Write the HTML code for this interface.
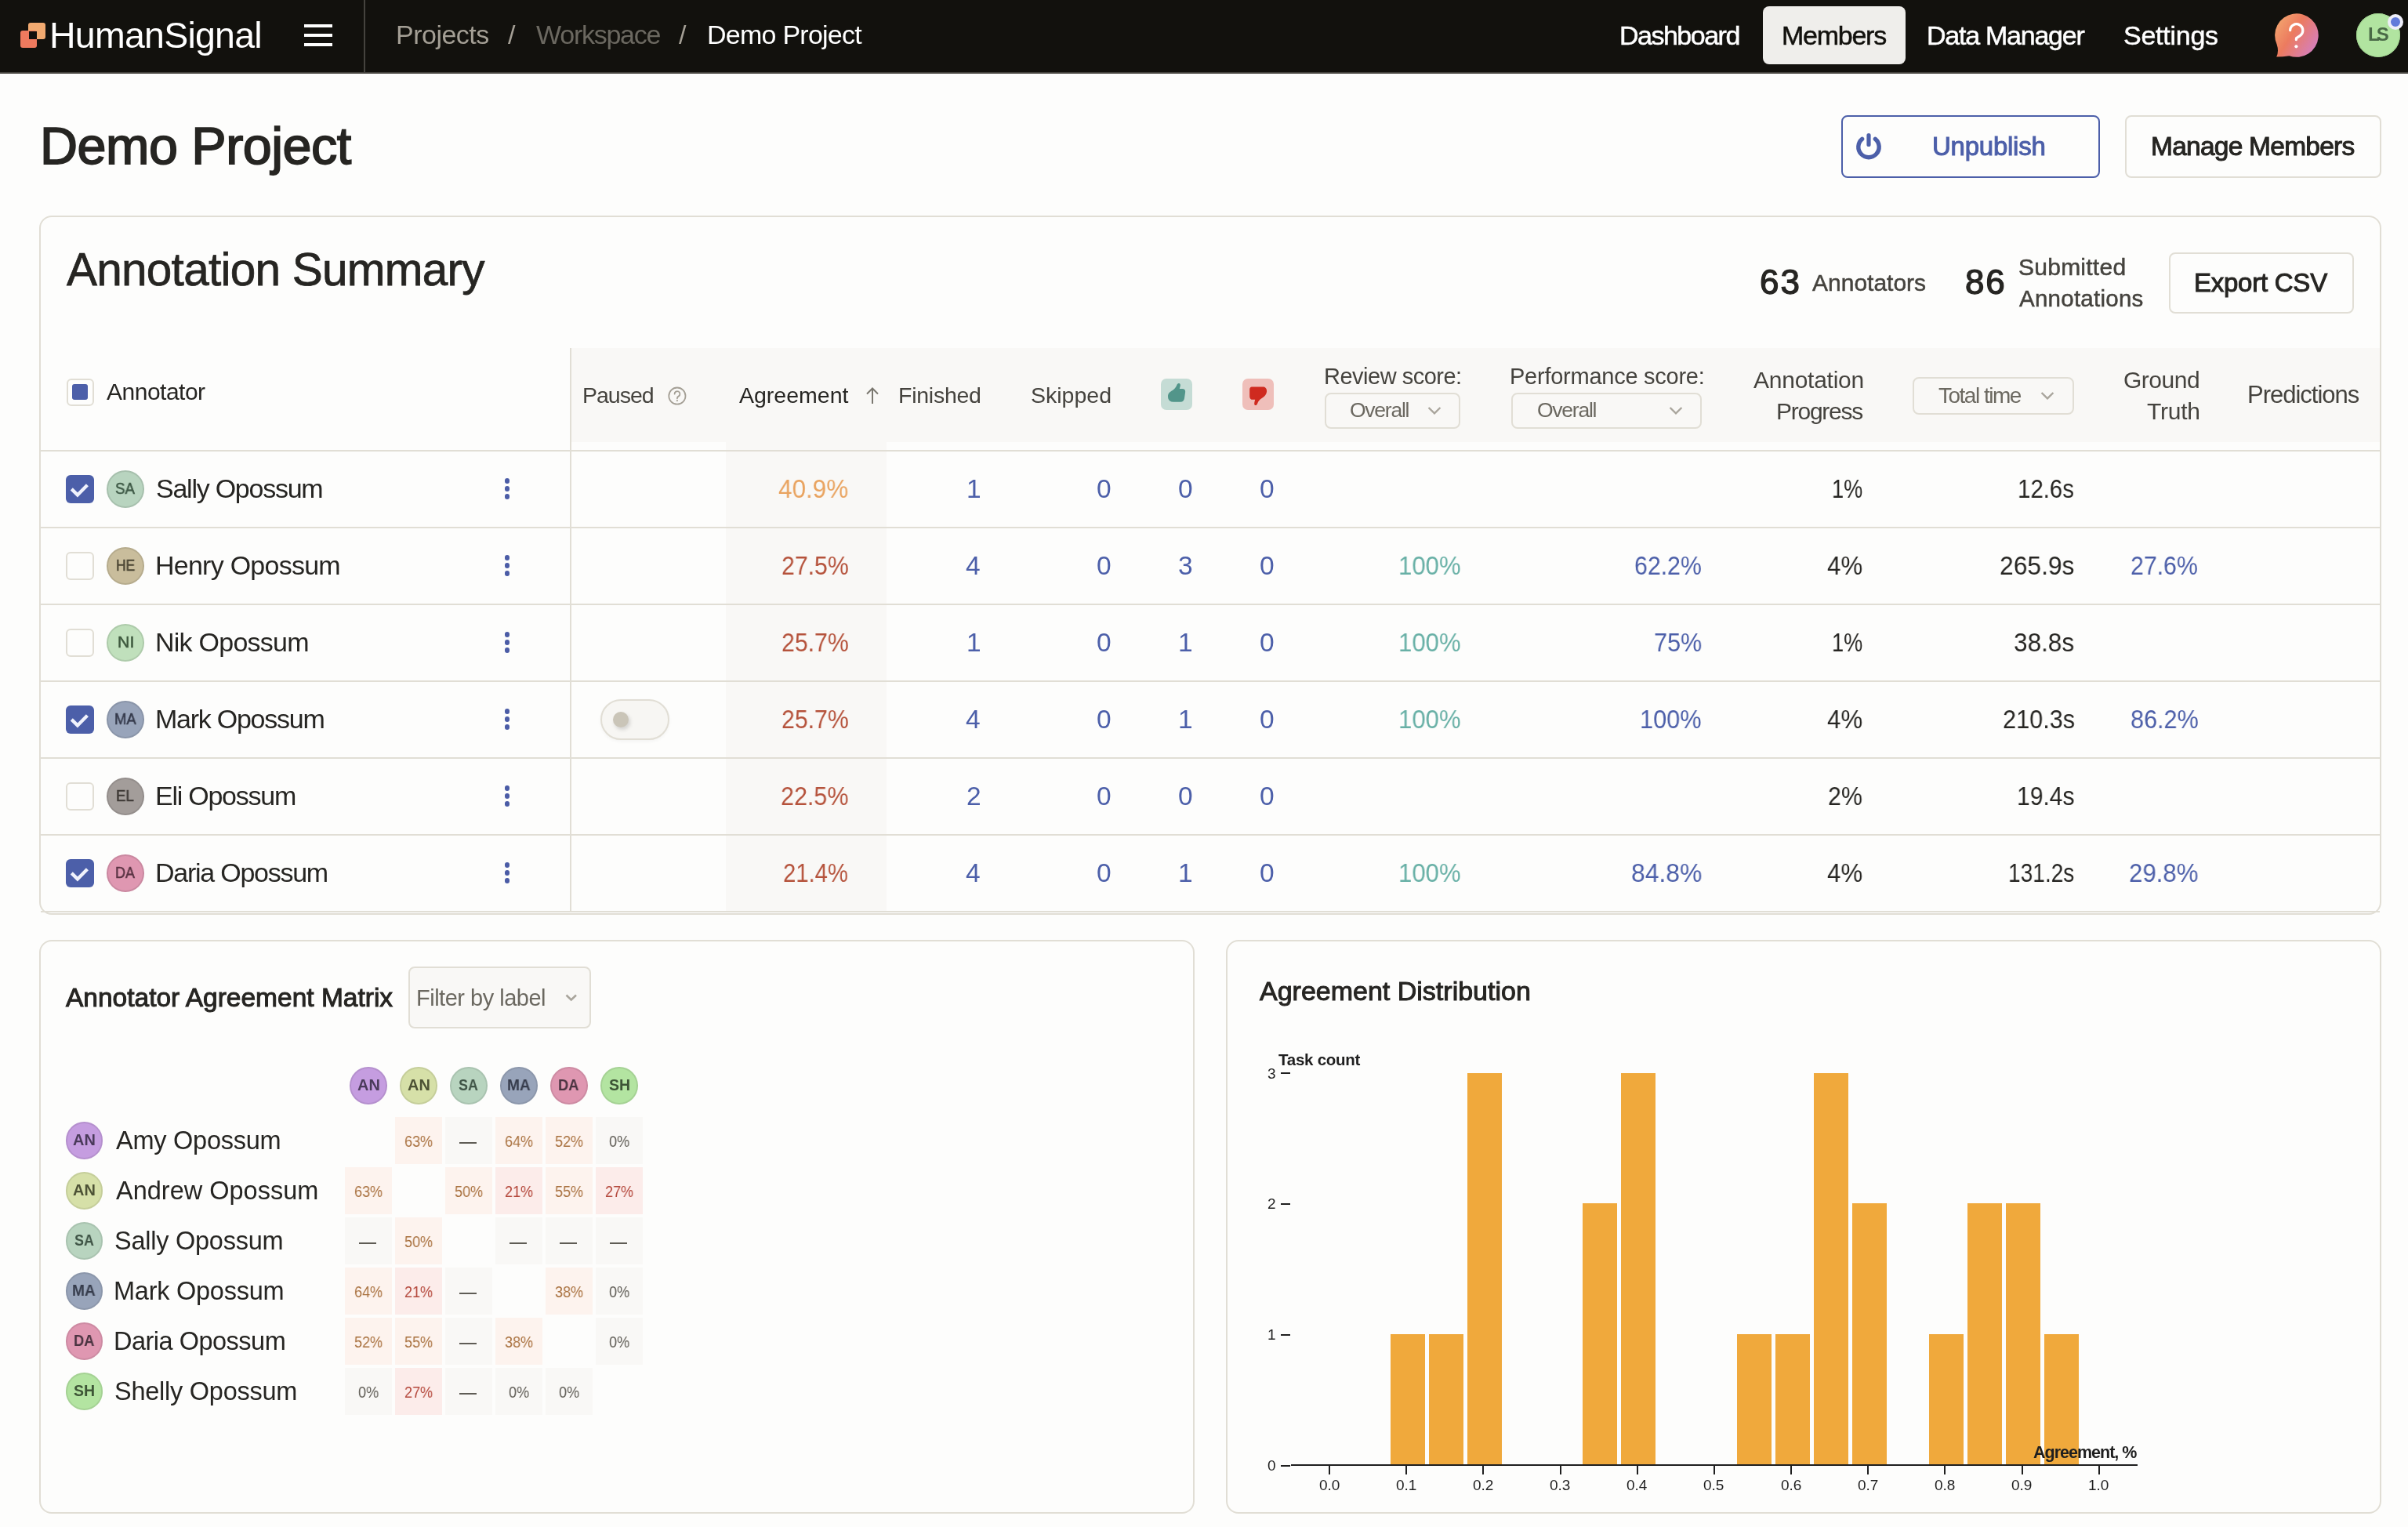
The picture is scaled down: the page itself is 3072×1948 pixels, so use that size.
<!DOCTYPE html><html><head><meta charset="utf-8"><style>
html,body{margin:0;padding:0;width:3072px;height:1948px;overflow:hidden;background:#fdfdfc}
body{position:relative;font-family:"Liberation Sans",sans-serif}
.t{position:absolute;white-space:pre;will-change:transform}
</style></head><body>
<div style="position:absolute;left:0px;top:0px;width:3072px;height:92px;background:#12110d"></div>
<div style="position:absolute;left:0px;top:92px;width:3072px;height:2px;background:#45433e"></div>
<div style="position:absolute;left:36px;top:29px;width:22px;height:21px;background:#f2aa70;border-radius:3px"></div>
<div style="position:absolute;left:26px;top:39px;width:21px;height:22px;background:#ee7a5e;border-radius:3px"></div>
<div style="position:absolute;left:37px;top:40px;width:10px;height:10px;background:#12110d"></div>
<div class="t" style="left:62.70px;top:21.75px;font-size:46.5px;line-height:46.5px;letter-spacing:-0.75px;font-weight:400;color:#ffffff;">HumanSignal</div>
<div style="position:absolute;left:388px;top:31px;width:36px;height:4px;background:#fff"></div>
<div style="position:absolute;left:388px;top:43px;width:36px;height:4px;background:#fff"></div>
<div style="position:absolute;left:388px;top:55px;width:36px;height:4px;background:#fff"></div>
<div style="position:absolute;left:464px;top:0px;width:2px;height:92px;background:#45433e"></div>
<div class="t" style="left:505.00px;top:27.10px;font-size:34.0px;line-height:34.0px;letter-spacing:-0.5px;font-weight:400;color:#a49f95;">Projects</div>
<div class="t" style="left:647.50px;top:27.10px;font-size:34.0px;line-height:34.0px;letter-spacing:0px;font-weight:400;color:#a49f95;">/</div>
<div class="t" style="left:684.40px;top:27.10px;font-size:34.0px;line-height:34.0px;letter-spacing:-1.25px;font-weight:400;color:#6b6860;">Workspace</div>
<div class="t" style="left:866.40px;top:27.10px;font-size:34.0px;line-height:34.0px;letter-spacing:0px;font-weight:400;color:#a49f95;">/</div>
<div class="t" style="left:901.80px;top:27.10px;font-size:34.0px;line-height:34.0px;letter-spacing:-0.75px;font-weight:400;color:#ffffff;">Demo Project</div>
<div class="t" style="left:2066.30px;top:27.50px;font-size:34.0px;line-height:34.0px;letter-spacing:-1.5px;font-weight:400;-webkit-text-stroke:0.5px;color:#ffffff;">Dashboard</div>
<div style="position:absolute;left:2249px;top:8px;width:182px;height:74px;background:#efeeeb;border-radius:8px"></div>
<div class="t" style="left:2272.60px;top:27.50px;font-size:34.0px;line-height:34.0px;letter-spacing:-1.25px;font-weight:400;-webkit-text-stroke:0.5px;color:#12110d;">Members</div>
<div class="t" style="left:2457.60px;top:27.50px;font-size:34.0px;line-height:34.0px;letter-spacing:-1.25px;font-weight:400;-webkit-text-stroke:0.5px;color:#ffffff;">Data Manager</div>
<div class="t" style="left:2709.00px;top:27.50px;font-size:34.0px;line-height:34.0px;letter-spacing:-0.25px;font-weight:400;-webkit-text-stroke:0.5px;color:#ffffff;">Settings</div>
<svg style="position:absolute;left:2898px;top:14px" width="64" height="64" viewBox="2898 14 64 64">
<defs><linearGradient id="hg" x1="0" y1="0.1" x2="1" y2="0.75"><stop offset="0" stop-color="#f4aa70"/><stop offset="0.45" stop-color="#ec7b5f"/><stop offset="1" stop-color="#d47fc0"/></linearGradient></defs>
<path d="M2904.6 56.5 A27.8 27.8 0 1 1 2920.5 71.2 Q2912 72.4 2904.2 72.4 Q2907.6 65.5 2904.6 56.5 Z" fill="url(#hg)"/>
<path d="M2921.6 38.6 A8.1 8.1 0 1 1 2934.2 45.6 L2929.6 48.6 L2929.4 50.6" stroke="#fff" stroke-width="3.3" fill="none" stroke-linecap="round" stroke-linejoin="round"/>
<circle cx="2929.4" cy="59.3" r="2.1" fill="#fff"/></svg>
<div style="position:absolute;left:3006px;top:17px;width:56px;height:56px;background:#b1e4a0;border-radius:50%;box-shadow:inset 0 0 0 1px #9fd18e"></div>
<div class="t" style="left:3020.80px;top:32.30px;font-size:24.0px;line-height:24.0px;letter-spacing:-4.0px;font-weight:700;color:#4a6a47;">LS</div>
<div style="position:absolute;left:3046px;top:18px;width:20px;height:20px;background:#617ada;border-radius:50%;box-shadow:0 0 0 0 #fff;border:4px solid #eeeef8;box-sizing:border-box"></div>
<div class="t" style="left:50.80px;top:152.65px;font-size:66.5px;line-height:66.5px;letter-spacing:-0.5px;font-weight:400;-webkit-text-stroke:1.75px;color:#262522;">Demo Project</div>
<div style="position:absolute;left:2349px;top:147px;width:330px;height:80px;border:2px solid #4c5fa9;border-radius:8px;box-sizing:border-box"></div>
<svg style="position:absolute;left:2364px;top:166px" width="40" height="40" viewBox="0 0 40 40">
<path d="M11.6 11.3 A13.2 13.2 0 1 0 28.4 11.3" stroke="#4c5fa9" stroke-width="5.4" fill="none" stroke-linecap="round"/>
<line x1="20" y1="6.6" x2="20" y2="18.5" stroke="#4c5fa9" stroke-width="5.2" stroke-linecap="round"/></svg>
<div class="t" style="left:2465.40px;top:169.90px;font-size:33.0px;line-height:33.0px;letter-spacing:-0.25px;font-weight:400;-webkit-text-stroke:1.0px;color:#4c5fa9;">Unpublish</div>
<div style="position:absolute;left:2711px;top:147px;width:327px;height:80px;border:2px solid #e1ded5;border-radius:8px;box-sizing:border-box"></div>
<div class="t" style="left:2743.70px;top:169.75px;font-size:33.5px;line-height:33.5px;letter-spacing:-0.75px;font-weight:400;-webkit-text-stroke:1.0px;color:#262522;">Manage Members</div>
<div style="position:absolute;left:50px;top:275px;width:2988px;height:892px;border:2px solid #e1ded5;border-radius:16px;box-sizing:border-box;background:#fdfdfc"></div>
<div class="t" style="left:84.70px;top:315.25px;font-size:58.5px;line-height:58.5px;letter-spacing:-0.75px;font-weight:400;-webkit-text-stroke:0.75px;color:#262522;">Annotation Summary</div>
<div class="t" style="left:2245.00px;top:338.40px;font-size:44.0px;line-height:44.0px;letter-spacing:2.0px;font-weight:400;-webkit-text-stroke:1.25px;color:#262522;">63</div>
<div class="t" style="left:2312.30px;top:345.70px;font-size:30.0px;line-height:30.0px;letter-spacing:0.0px;font-weight:400;-webkit-text-stroke:0.5px;color:#45433e;">Annotators</div>
<div class="t" style="left:2506.90px;top:338.40px;font-size:44.0px;line-height:44.0px;letter-spacing:1.75px;font-weight:400;-webkit-text-stroke:1.25px;color:#262522;">86</div>
<div class="t" style="left:2574.60px;top:326.10px;font-size:30.0px;line-height:30.0px;letter-spacing:0.25px;font-weight:400;-webkit-text-stroke:0.5px;color:#45433e;">Submitted</div>
<div class="t" style="left:2575.60px;top:365.75px;font-size:29.5px;line-height:29.5px;letter-spacing:0.25px;font-weight:400;-webkit-text-stroke:0.5px;color:#45433e;">Annotations</div>
<div style="position:absolute;left:2767px;top:322px;width:236px;height:78px;border:2px solid #e1ded5;border-radius:8px;box-sizing:border-box"></div>
<div class="t" style="left:2799.00px;top:344.30px;font-size:33.0px;line-height:33.0px;letter-spacing:-0.25px;font-weight:400;-webkit-text-stroke:1.0px;color:#262522;">Export CSV</div>
<div style="position:absolute;left:729px;top:444px;width:2307px;height:120px;background:#f9f8f6"></div>
<div style="position:absolute;left:926px;top:564px;width:205px;height:598px;background:#f9f8f6"></div>
<div style="position:absolute;left:52px;top:574px;width:2984px;height:2px;background:#e1ded5"></div>
<div style="position:absolute;left:52px;top:672px;width:2984px;height:2px;background:#e1ded5"></div>
<div style="position:absolute;left:52px;top:770px;width:2984px;height:2px;background:#e1ded5"></div>
<div style="position:absolute;left:52px;top:868px;width:2984px;height:2px;background:#e1ded5"></div>
<div style="position:absolute;left:52px;top:966px;width:2984px;height:2px;background:#e1ded5"></div>
<div style="position:absolute;left:52px;top:1064px;width:2984px;height:2px;background:#e1ded5"></div>
<div style="position:absolute;left:52px;top:1162px;width:2984px;height:2px;background:#e1ded5"></div>
<div style="position:absolute;left:727px;top:444px;width:2px;height:718px;background:#e1ded5"></div>
<div style="position:absolute;left:85px;top:483px;width:35px;height:35px;border:2px solid #e1ded5;border-radius:6px;box-sizing:border-box;background:#fdfdfc"></div>
<div style="position:absolute;left:92px;top:490px;width:20px;height:20px;background:#4c5fa9;border-radius:3px"></div>
<div class="t" style="left:136.20px;top:485.30px;font-size:30.0px;line-height:30.0px;letter-spacing:-0.5px;font-weight:400;color:#262522;">Annotator</div>
<div class="t" style="left:742.60px;top:489.75px;font-size:28.5px;line-height:28.5px;letter-spacing:-1.0px;font-weight:400;color:#45433e;">Paused</div>
<svg style="position:absolute;left:851px;top:492px" width="26" height="26" viewBox="0 0 26 26">
<circle cx="12.9" cy="13.1" r="10.6" stroke="#a49f95" stroke-width="1.8" fill="none"/>
<path d="M9.6 10.6 a3.4 3.4 0 1 1 5.2 2.8 q-1.9 1.1 -1.9 2.9" stroke="#a49f95" stroke-width="1.8" fill="none" stroke-linecap="round"/>
<circle cx="12.9" cy="19.1" r="1.1" fill="#a49f95"/></svg>
<div class="t" style="left:942.60px;top:489.75px;font-size:28.5px;line-height:28.5px;letter-spacing:0.0px;font-weight:400;color:#262522;">Agreement</div>
<svg style="position:absolute;left:1100px;top:490px" width="26" height="28" viewBox="0 0 26 28">
<path d="M13 25 V6 M6 12.5 L13 5.5 L20 12.5" stroke="#7a776f" stroke-width="2" fill="none"/></svg>
<div class="t" style="left:1145.70px;top:489.75px;font-size:28.5px;line-height:28.5px;letter-spacing:-0.25px;font-weight:400;color:#45433e;">Finished</div>
<div class="t" style="left:1314.90px;top:489.75px;font-size:28.5px;line-height:28.5px;letter-spacing:0.0px;font-weight:400;color:#45433e;">Skipped</div>
<div style="position:absolute;left:1481px;top:483px;width:40px;height:40px;background:#c5dcd5;border-radius:7px"></div>
<svg style="position:absolute;left:1481px;top:483px" width="40" height="40" viewBox="0 0 40 40">
<path d="M22.5 6 C24.5 5.5 25.3 7.5 24.6 10 L23.8 13 L27.5 13 C30.5 13 31.5 15 31 18 L30 25 C29.5 28 28 29.8 25 29.8 L16 29.8 C11.5 29.8 9 27 9 23 C9 19 11 17.5 13.5 15.8 C16.5 14 18.5 12 19.8 9.5 C20.5 7.5 21.2 6.3 22.5 6 Z" fill="#52958a"/></svg>
<div style="position:absolute;left:1585px;top:483px;width:40px;height:40px;background:#efbfba;border-radius:7px"></div>
<svg style="position:absolute;left:1585px;top:483px" width="40" height="40" viewBox="0 0 40 40">
<path d="M12 10.5 L26 10.5 C29.5 10.5 31.5 13 31 17 C30.5 20.5 28.5 22.5 25.5 24.5 C22.5 26.5 20.5 28 19.5 31 C18.8 33.3 17.5 34.5 16.3 34 C15 33.5 15 31.5 15.5 29.5 L16.2 26.8 L12.5 26.8 C10.3 26.8 9.2 25 9.2 22.5 L9.2 14 C9.2 11.8 10.3 10.5 12 10.5 Z" fill="#cf2a1f"/></svg>
<div class="t" style="left:1688.70px;top:465.70px;font-size:29.0px;line-height:29.0px;letter-spacing:-0.5px;font-weight:400;color:#45433e;">Review score:</div>
<div style="position:absolute;left:1690px;top:501px;width:173px;height:46px;border:2px solid #e1ded5;border-radius:8px;box-sizing:border-box;background:transparent"></div>
<div class="t" style="left:1722.00px;top:510.45px;font-size:26.5px;line-height:26.5px;letter-spacing:-1.25px;font-weight:400;color:#6b6860;">Overall</div>
<svg style="position:absolute;left:1820.4px;top:516.0px" width="20" height="16" viewBox="0 0 20 16"><path d="M2.6 4 L10 11.4 L17.4 4" stroke="#a9a59c" stroke-width="2.4" fill="none"/></svg>
<div class="t" style="left:1926.00px;top:465.70px;font-size:29.0px;line-height:29.0px;letter-spacing:-0.25px;font-weight:400;color:#45433e;">Performance score:</div>
<div style="position:absolute;left:1928px;top:501px;width:243px;height:46px;border:2px solid #e1ded5;border-radius:8px;box-sizing:border-box;background:transparent"></div>
<div class="t" style="left:1960.80px;top:510.45px;font-size:26.5px;line-height:26.5px;letter-spacing:-1.25px;font-weight:400;color:#6b6860;">Overall</div>
<svg style="position:absolute;left:2127.5px;top:516.0px" width="20" height="16" viewBox="0 0 20 16"><path d="M2.6 4 L10 11.4 L17.4 4" stroke="#a9a59c" stroke-width="2.4" fill="none"/></svg>
<div class="t" style="left:2236.70px;top:469.50px;font-size:30.0px;line-height:30.0px;letter-spacing:-0.25px;font-weight:400;color:#45433e;">Annotation</div>
<div class="t" style="left:2265.70px;top:509.60px;font-size:30.0px;line-height:30.0px;letter-spacing:-1.25px;font-weight:400;color:#45433e;">Progress</div>
<div style="position:absolute;left:2440px;top:481px;width:206px;height:48px;border:2px solid #e1ded5;border-radius:8px;box-sizing:border-box;background:transparent"></div>
<div class="t" style="left:2473.40px;top:490.90px;font-size:28.0px;line-height:28.0px;letter-spacing:-1.5px;font-weight:400;color:#6b6860;">Total time</div>
<svg style="position:absolute;left:2601.7px;top:497.0px" width="20" height="16" viewBox="0 0 20 16"><path d="M2.6 4 L10 11.4 L17.4 4" stroke="#a9a59c" stroke-width="2.4" fill="none"/></svg>
<div class="t" style="left:2708.50px;top:469.50px;font-size:30.0px;line-height:30.0px;letter-spacing:-0.5px;font-weight:400;color:#45433e;">Ground</div>
<div class="t" style="left:2738.50px;top:509.60px;font-size:30.0px;line-height:30.0px;letter-spacing:-0.25px;font-weight:400;color:#45433e;">Truth</div>
<div class="t" style="left:2867.40px;top:488.40px;font-size:31.0px;line-height:31.0px;letter-spacing:-1.0px;font-weight:400;color:#45433e;">Predictions</div>
<div style="position:absolute;left:84px;top:606px;width:36px;height:36px;background:#4c5fa9;border-radius:6px"></div>
<svg style="position:absolute;left:84px;top:606px" width="36" height="36" viewBox="0 0 36 36"><path d="M7.3 17.9 L14.9 25.4 L27.4 12.7" stroke="#f0f2fc" stroke-width="4.3" fill="none"/></svg>
<div style="position:absolute;left:136px;top:600.25px;width:47.75px;height:47.5px;background:#b8d4bf;border-radius:50%;box-shadow:inset 0 0 0 2px rgba(0,0,0,0.09)"></div>
<div class="t" style="left:147.24px;top:614.15px;font-size:19.5px;line-height:19.5px;letter-spacing:0px;font-weight:400;-webkit-text-stroke:0.5px;transform:scaleX(0.9600);transform-origin:0 0;color:#3f5a47;">SA</div>
<div class="t" style="left:198.90px;top:606.40px;font-size:34.0px;line-height:34.0px;letter-spacing:-1.25px;font-weight:400;color:#262522;">Sally Opossum</div>
<div style="position:absolute;left:643.8px;top:610.3px;width:6.400000000000091px;height:6.400000000000091px;background:#4b5ca6;border-radius:50%"></div>
<div style="position:absolute;left:643.8px;top:620.3px;width:6.400000000000091px;height:6.400000000000091px;background:#4b5ca6;border-radius:50%"></div>
<div style="position:absolute;left:643.8px;top:630.3px;width:6.400000000000091px;height:6.400000000000091px;background:#4b5ca6;border-radius:50%"></div>
<div class="t" style="left:993.06px;top:607.15px;font-size:33.5px;line-height:33.5px;letter-spacing:0px;font-weight:400;transform:scaleX(0.9387);transform-origin:0 0;color:#e9a35f;">40.9%</div>
<div class="t" style="left:1233.00px;top:607.15px;font-size:33.5px;line-height:33.5px;letter-spacing:0px;font-weight:400;color:#4c5fa9;">1</div>
<div class="t" style="left:1399.00px;top:607.15px;font-size:33.5px;line-height:33.5px;letter-spacing:0px;font-weight:400;color:#4c5fa9;">0</div>
<div class="t" style="left:1503.00px;top:607.15px;font-size:33.5px;line-height:33.5px;letter-spacing:0px;font-weight:400;color:#4c5fa9;">0</div>
<div class="t" style="left:1607.00px;top:607.15px;font-size:33.5px;line-height:33.5px;letter-spacing:0px;font-weight:400;color:#4c5fa9;">0</div>
<div class="t" style="left:2336.68px;top:607.15px;font-size:33.5px;line-height:33.5px;letter-spacing:0px;font-weight:400;transform:scaleX(0.8089);transform-origin:0 0;color:#262522;">1%</div>
<div class="t" style="left:2574.25px;top:607.15px;font-size:33.5px;line-height:33.5px;letter-spacing:0px;font-weight:400;transform:scaleX(0.8772);transform-origin:0 0;color:#262522;">12.6s</div>
<div style="position:absolute;left:84px;top:704px;width:36px;height:36px;border:2px solid #e1ded5;border-radius:6px;box-sizing:border-box;background:#fdfdfc"></div>
<div style="position:absolute;left:136px;top:698.25px;width:47.75px;height:47.5px;background:#c9bd9c;border-radius:50%;box-shadow:inset 0 0 0 2px rgba(0,0,0,0.09)"></div>
<div class="t" style="left:147.65px;top:712.15px;font-size:19.5px;line-height:19.5px;letter-spacing:0px;font-weight:400;-webkit-text-stroke:0.5px;transform:scaleX(0.8962);transform-origin:0 0;color:#4a4433;">HE</div>
<div class="t" style="left:197.90px;top:704.40px;font-size:34.0px;line-height:34.0px;letter-spacing:-0.75px;font-weight:400;color:#262522;">Henry Opossum</div>
<div style="position:absolute;left:643.8px;top:708.3px;width:6.400000000000091px;height:6.400000000000091px;background:#4b5ca6;border-radius:50%"></div>
<div style="position:absolute;left:643.8px;top:718.3px;width:6.400000000000091px;height:6.400000000000091px;background:#4b5ca6;border-radius:50%"></div>
<div style="position:absolute;left:643.8px;top:728.3px;width:6.400000000000091px;height:6.400000000000091px;background:#4b5ca6;border-radius:50%"></div>
<div class="t" style="left:996.50px;top:705.15px;font-size:33.5px;line-height:33.5px;letter-spacing:0px;font-weight:400;transform:scaleX(0.9022);transform-origin:0 0;color:#b5523b;">27.5%</div>
<div class="t" style="left:1232.00px;top:705.15px;font-size:33.5px;line-height:33.5px;letter-spacing:0px;font-weight:400;color:#4c5fa9;">4</div>
<div class="t" style="left:1399.00px;top:705.15px;font-size:33.5px;line-height:33.5px;letter-spacing:0px;font-weight:400;color:#4c5fa9;">0</div>
<div class="t" style="left:1503.00px;top:705.15px;font-size:33.5px;line-height:33.5px;letter-spacing:0px;font-weight:400;color:#4c5fa9;">3</div>
<div class="t" style="left:1607.00px;top:705.15px;font-size:33.5px;line-height:33.5px;letter-spacing:0px;font-weight:400;color:#4c5fa9;">0</div>
<div class="t" style="left:1783.64px;top:705.15px;font-size:33.5px;line-height:33.5px;letter-spacing:0px;font-weight:400;transform:scaleX(0.9277);transform-origin:0 0;color:#68b0a6;">100%</div>
<div class="t" style="left:2085.29px;top:705.15px;font-size:33.5px;line-height:33.5px;letter-spacing:0px;font-weight:400;transform:scaleX(0.9033);transform-origin:0 0;color:#4c5fa9;">62.2%</div>
<div class="t" style="left:2330.97px;top:705.15px;font-size:33.5px;line-height:33.5px;letter-spacing:0px;font-weight:400;transform:scaleX(0.9304);transform-origin:0 0;color:#262522;">4%</div>
<div class="t" style="left:2551.40px;top:705.15px;font-size:33.5px;line-height:33.5px;letter-spacing:0px;font-weight:400;transform:scaleX(0.9485);transform-origin:0 0;color:#262522;">265.9s</div>
<div class="t" style="left:2718.49px;top:705.15px;font-size:33.5px;line-height:33.5px;letter-spacing:0px;font-weight:400;transform:scaleX(0.9033);transform-origin:0 0;color:#4c5fa9;">27.6%</div>
<div style="position:absolute;left:84px;top:802px;width:36px;height:36px;border:2px solid #e1ded5;border-radius:6px;box-sizing:border-box;background:#fdfdfc"></div>
<div style="position:absolute;left:136px;top:796.25px;width:47.75px;height:47.5px;background:#c0e0bc;border-radius:50%;box-shadow:inset 0 0 0 2px rgba(0,0,0,0.09)"></div>
<div class="t" style="left:149.81px;top:810.15px;font-size:19.5px;line-height:19.5px;letter-spacing:0px;font-weight:400;-webkit-text-stroke:0.5px;transform:scaleX(1.0941);transform-origin:0 0;color:#3f5a3f;">NI</div>
<div class="t" style="left:197.90px;top:802.40px;font-size:34.0px;line-height:34.0px;letter-spacing:-0.75px;font-weight:400;color:#262522;">Nik Opossum</div>
<div style="position:absolute;left:643.8px;top:806.3px;width:6.400000000000091px;height:6.400000000000091px;background:#4b5ca6;border-radius:50%"></div>
<div style="position:absolute;left:643.8px;top:816.3px;width:6.400000000000091px;height:6.400000000000091px;background:#4b5ca6;border-radius:50%"></div>
<div style="position:absolute;left:643.8px;top:826.3px;width:6.400000000000091px;height:6.400000000000091px;background:#4b5ca6;border-radius:50%"></div>
<div class="t" style="left:996.50px;top:803.15px;font-size:33.5px;line-height:33.5px;letter-spacing:0px;font-weight:400;transform:scaleX(0.9022);transform-origin:0 0;color:#b5523b;">25.7%</div>
<div class="t" style="left:1233.00px;top:803.15px;font-size:33.5px;line-height:33.5px;letter-spacing:0px;font-weight:400;color:#4c5fa9;">1</div>
<div class="t" style="left:1399.00px;top:803.15px;font-size:33.5px;line-height:33.5px;letter-spacing:0px;font-weight:400;color:#4c5fa9;">0</div>
<div class="t" style="left:1503.00px;top:803.15px;font-size:33.5px;line-height:33.5px;letter-spacing:0px;font-weight:400;color:#4c5fa9;">1</div>
<div class="t" style="left:1607.00px;top:803.15px;font-size:33.5px;line-height:33.5px;letter-spacing:0px;font-weight:400;color:#4c5fa9;">0</div>
<div class="t" style="left:1783.64px;top:803.15px;font-size:33.5px;line-height:33.5px;letter-spacing:0px;font-weight:400;transform:scaleX(0.9277);transform-origin:0 0;color:#68b0a6;">100%</div>
<div class="t" style="left:2109.97px;top:803.15px;font-size:33.5px;line-height:33.5px;letter-spacing:0px;font-weight:400;transform:scaleX(0.9125);transform-origin:0 0;color:#4c5fa9;">75%</div>
<div class="t" style="left:2336.68px;top:803.15px;font-size:33.5px;line-height:33.5px;letter-spacing:0px;font-weight:400;transform:scaleX(0.8089);transform-origin:0 0;color:#262522;">1%</div>
<div class="t" style="left:2569.06px;top:803.15px;font-size:33.5px;line-height:33.5px;letter-spacing:0px;font-weight:400;transform:scaleX(0.9412);transform-origin:0 0;color:#262522;">38.8s</div>
<div style="position:absolute;left:84px;top:900px;width:36px;height:36px;background:#4c5fa9;border-radius:6px"></div>
<svg style="position:absolute;left:84px;top:900px" width="36" height="36" viewBox="0 0 36 36"><path d="M7.3 17.9 L14.9 25.4 L27.4 12.7" stroke="#f0f2fc" stroke-width="4.3" fill="none"/></svg>
<div style="position:absolute;left:136px;top:894.25px;width:47.75px;height:47.5px;background:#98a4ba;border-radius:50%;box-shadow:inset 0 0 0 2px rgba(0,0,0,0.09)"></div>
<div class="t" style="left:146.00px;top:908.15px;font-size:19.5px;line-height:19.5px;letter-spacing:0px;font-weight:400;-webkit-text-stroke:0.5px;transform:scaleX(0.9464);transform-origin:0 0;color:#34394a;">MA</div>
<div class="t" style="left:197.90px;top:900.40px;font-size:34.0px;line-height:34.0px;letter-spacing:-1.25px;font-weight:400;color:#262522;">Mark Opossum</div>
<div style="position:absolute;left:643.8px;top:904.3px;width:6.400000000000091px;height:6.400000000000091px;background:#4b5ca6;border-radius:50%"></div>
<div style="position:absolute;left:643.8px;top:914.3px;width:6.400000000000091px;height:6.400000000000091px;background:#4b5ca6;border-radius:50%"></div>
<div style="position:absolute;left:643.8px;top:924.3px;width:6.400000000000091px;height:6.400000000000091px;background:#4b5ca6;border-radius:50%"></div>
<div style="position:absolute;left:766px;top:892px;width:88px;height:52px;background:#f7f6f3;border:2px solid #e1ded5;border-radius:26px;box-sizing:border-box;box-shadow:0 2px 4px rgba(0,0,0,0.04)"></div>
<div style="position:absolute;left:782px;top:908px;width:20px;height:20px;background:#cac5b8;border-radius:50%;box-shadow:2px 3px 5px rgba(0,0,0,0.15)"></div>
<div class="t" style="left:996.50px;top:901.15px;font-size:33.5px;line-height:33.5px;letter-spacing:0px;font-weight:400;transform:scaleX(0.9022);transform-origin:0 0;color:#b5523b;">25.7%</div>
<div class="t" style="left:1232.00px;top:901.15px;font-size:33.5px;line-height:33.5px;letter-spacing:0px;font-weight:400;color:#4c5fa9;">4</div>
<div class="t" style="left:1399.00px;top:901.15px;font-size:33.5px;line-height:33.5px;letter-spacing:0px;font-weight:400;color:#4c5fa9;">0</div>
<div class="t" style="left:1503.00px;top:901.15px;font-size:33.5px;line-height:33.5px;letter-spacing:0px;font-weight:400;color:#4c5fa9;">1</div>
<div class="t" style="left:1607.00px;top:901.15px;font-size:33.5px;line-height:33.5px;letter-spacing:0px;font-weight:400;color:#4c5fa9;">0</div>
<div class="t" style="left:1783.64px;top:901.15px;font-size:33.5px;line-height:33.5px;letter-spacing:0px;font-weight:400;transform:scaleX(0.9277);transform-origin:0 0;color:#68b0a6;">100%</div>
<div class="t" style="left:2092.37px;top:901.15px;font-size:33.5px;line-height:33.5px;letter-spacing:0px;font-weight:400;transform:scaleX(0.9157);transform-origin:0 0;color:#4c5fa9;">100%</div>
<div class="t" style="left:2330.97px;top:901.15px;font-size:33.5px;line-height:33.5px;letter-spacing:0px;font-weight:400;transform:scaleX(0.9304);transform-origin:0 0;color:#262522;">4%</div>
<div class="t" style="left:2554.67px;top:901.15px;font-size:33.5px;line-height:33.5px;letter-spacing:0px;font-weight:400;transform:scaleX(0.9155);transform-origin:0 0;color:#262522;">210.3s</div>
<div class="t" style="left:2717.59px;top:901.15px;font-size:33.5px;line-height:33.5px;letter-spacing:0px;font-weight:400;transform:scaleX(0.9129);transform-origin:0 0;color:#4c5fa9;">86.2%</div>
<div style="position:absolute;left:84px;top:998px;width:36px;height:36px;border:2px solid #e1ded5;border-radius:6px;box-sizing:border-box;background:#fdfdfc"></div>
<div style="position:absolute;left:136px;top:992.25px;width:47.75px;height:47.5px;background:#a39d9a;border-radius:50%;box-shadow:inset 0 0 0 2px rgba(0,0,0,0.09)"></div>
<div class="t" style="left:148.24px;top:1006.15px;font-size:19.5px;line-height:19.5px;letter-spacing:0px;font-weight:400;-webkit-text-stroke:0.5px;transform:scaleX(0.9565);transform-origin:0 0;color:#3d3835;">EL</div>
<div class="t" style="left:197.90px;top:998.40px;font-size:34.0px;line-height:34.0px;letter-spacing:-1.25px;font-weight:400;color:#262522;">Eli Opossum</div>
<div style="position:absolute;left:643.8px;top:1002.3px;width:6.400000000000091px;height:6.400000000000091px;background:#4b5ca6;border-radius:50%"></div>
<div style="position:absolute;left:643.8px;top:1012.3px;width:6.400000000000091px;height:6.400000000000091px;background:#4b5ca6;border-radius:50%"></div>
<div style="position:absolute;left:643.8px;top:1022.3px;width:6.400000000000091px;height:6.400000000000091px;background:#4b5ca6;border-radius:50%"></div>
<div class="t" style="left:995.78px;top:999.15px;font-size:33.5px;line-height:33.5px;letter-spacing:0px;font-weight:400;transform:scaleX(0.9098);transform-origin:0 0;color:#b5523b;">22.5%</div>
<div class="t" style="left:1233.00px;top:999.15px;font-size:33.5px;line-height:33.5px;letter-spacing:0px;font-weight:400;color:#4c5fa9;">2</div>
<div class="t" style="left:1399.00px;top:999.15px;font-size:33.5px;line-height:33.5px;letter-spacing:0px;font-weight:400;color:#4c5fa9;">0</div>
<div class="t" style="left:1503.00px;top:999.15px;font-size:33.5px;line-height:33.5px;letter-spacing:0px;font-weight:400;color:#4c5fa9;">0</div>
<div class="t" style="left:1607.00px;top:999.15px;font-size:33.5px;line-height:33.5px;letter-spacing:0px;font-weight:400;color:#4c5fa9;">0</div>
<div class="t" style="left:2332.19px;top:999.15px;font-size:33.5px;line-height:33.5px;letter-spacing:0px;font-weight:400;transform:scaleX(0.9044);transform-origin:0 0;color:#262522;">2%</div>
<div class="t" style="left:2572.71px;top:999.15px;font-size:33.5px;line-height:33.5px;letter-spacing:0px;font-weight:400;transform:scaleX(0.8962);transform-origin:0 0;color:#262522;">19.4s</div>
<div style="position:absolute;left:84px;top:1096px;width:36px;height:36px;background:#4c5fa9;border-radius:6px"></div>
<svg style="position:absolute;left:84px;top:1096px" width="36" height="36" viewBox="0 0 36 36"><path d="M7.3 17.9 L14.9 25.4 L27.4 12.7" stroke="#f0f2fc" stroke-width="4.3" fill="none"/></svg>
<div style="position:absolute;left:136px;top:1090.25px;width:47.75px;height:47.5px;background:#df97b1;border-radius:50%;box-shadow:inset 0 0 0 2px rgba(0,0,0,0.09)"></div>
<div class="t" style="left:147.28px;top:1104.15px;font-size:19.5px;line-height:19.5px;letter-spacing:0px;font-weight:400;-webkit-text-stroke:0.5px;transform:scaleX(0.9231);transform-origin:0 0;color:#5a3343;">DA</div>
<div class="t" style="left:197.90px;top:1096.40px;font-size:34.0px;line-height:34.0px;letter-spacing:-1.25px;font-weight:400;color:#262522;">Daria Opossum</div>
<div style="position:absolute;left:643.8px;top:1100.3px;width:6.400000000000091px;height:6.400000000000091px;background:#4b5ca6;border-radius:50%"></div>
<div style="position:absolute;left:643.8px;top:1110.3px;width:6.400000000000091px;height:6.400000000000091px;background:#4b5ca6;border-radius:50%"></div>
<div style="position:absolute;left:643.8px;top:1120.3px;width:6.400000000000091px;height:6.400000000000091px;background:#4b5ca6;border-radius:50%"></div>
<div class="t" style="left:999.25px;top:1097.15px;font-size:33.5px;line-height:33.5px;letter-spacing:0px;font-weight:400;transform:scaleX(0.8728);transform-origin:0 0;color:#b5523b;">21.4%</div>
<div class="t" style="left:1232.00px;top:1097.15px;font-size:33.5px;line-height:33.5px;letter-spacing:0px;font-weight:400;color:#4c5fa9;">4</div>
<div class="t" style="left:1399.00px;top:1097.15px;font-size:33.5px;line-height:33.5px;letter-spacing:0px;font-weight:400;color:#4c5fa9;">0</div>
<div class="t" style="left:1503.00px;top:1097.15px;font-size:33.5px;line-height:33.5px;letter-spacing:0px;font-weight:400;color:#4c5fa9;">1</div>
<div class="t" style="left:1607.00px;top:1097.15px;font-size:33.5px;line-height:33.5px;letter-spacing:0px;font-weight:400;color:#4c5fa9;">0</div>
<div class="t" style="left:1783.64px;top:1097.15px;font-size:33.5px;line-height:33.5px;letter-spacing:0px;font-weight:400;transform:scaleX(0.9277);transform-origin:0 0;color:#68b0a6;">100%</div>
<div class="t" style="left:2080.85px;top:1097.15px;font-size:33.5px;line-height:33.5px;letter-spacing:0px;font-weight:400;transform:scaleX(0.9505);transform-origin:0 0;color:#4c5fa9;">84.8%</div>
<div class="t" style="left:2330.97px;top:1097.15px;font-size:33.5px;line-height:33.5px;letter-spacing:0px;font-weight:400;transform:scaleX(0.9304);transform-origin:0 0;color:#262522;">4%</div>
<div class="t" style="left:2562.32px;top:1097.15px;font-size:33.5px;line-height:33.5px;letter-spacing:0px;font-weight:400;transform:scaleX(0.8381);transform-origin:0 0;color:#262522;">131.2s</div>
<div class="t" style="left:2715.94px;top:1097.15px;font-size:33.5px;line-height:33.5px;letter-spacing:0px;font-weight:400;transform:scaleX(0.9304);transform-origin:0 0;color:#4c5fa9;">29.8%</div>
<div style="position:absolute;left:50px;top:1199px;width:1474px;height:732px;border:2px solid #e1ded5;border-radius:16px;box-sizing:border-box;background:#fdfdfc"></div>
<div class="t" style="left:84.30px;top:1255.55px;font-size:33.5px;line-height:33.5px;letter-spacing:0.0px;font-weight:400;-webkit-text-stroke:1.0px;color:#262522;">Annotator Agreement Matrix</div>
<div style="position:absolute;left:521px;top:1233px;width:233px;height:79px;border:2px solid #e1ded5;border-radius:8px;box-sizing:border-box;background:#f9f8f6"></div>
<div class="t" style="left:530.80px;top:1258.60px;font-size:29.0px;line-height:29.0px;letter-spacing:-0.5px;font-weight:400;color:#6b6860;">Filter by label</div>
<svg style="position:absolute;left:719px;top:1265px" width="20" height="16" viewBox="0 0 20 16"><path d="M3.5 4.5 L9.7 10.5 L16 4.5" stroke="#a9a59c" stroke-width="2.6" fill="none"/></svg>
<div style="position:absolute;left:446.2px;top:1361.2px;width:47.60000000000002px;height:47.59999999999991px;background:#c59de0;border-radius:50%;box-shadow:inset 0 0 0 2px rgba(0,0,0,0.08)"></div>
<div class="t" style="left:455.68px;top:1375.00px;font-size:19.5px;line-height:19.5px;letter-spacing:0px;font-weight:700;transform:scaleX(1.0231);transform-origin:0 0;color:#4a3a5a;">AN</div>
<div style="position:absolute;left:510.2px;top:1361.2px;width:47.599999999999966px;height:47.59999999999991px;background:#d6e0a8;border-radius:50%;box-shadow:inset 0 0 0 2px rgba(0,0,0,0.08)"></div>
<div class="t" style="left:519.68px;top:1375.00px;font-size:19.5px;line-height:19.5px;letter-spacing:0px;font-weight:700;transform:scaleX(1.0231);transform-origin:0 0;color:#4d5235;">AN</div>
<div style="position:absolute;left:574.2px;top:1361.2px;width:47.59999999999991px;height:47.59999999999991px;background:#b8d4bf;border-radius:50%;box-shadow:inset 0 0 0 2px rgba(0,0,0,0.08)"></div>
<div class="t" style="left:585.13px;top:1375.00px;font-size:19.5px;line-height:19.5px;letter-spacing:0px;font-weight:700;transform:scaleX(0.9192);transform-origin:0 0;color:#3f5446;">SA</div>
<div style="position:absolute;left:638.2px;top:1361.2px;width:47.59999999999991px;height:47.59999999999991px;background:#98a4ba;border-radius:50%;box-shadow:inset 0 0 0 2px rgba(0,0,0,0.08)"></div>
<div class="t" style="left:646.82px;top:1375.00px;font-size:19.5px;line-height:19.5px;letter-spacing:0px;font-weight:700;transform:scaleX(0.9793);transform-origin:0 0;color:#363c4c;">MA</div>
<div style="position:absolute;left:702.2px;top:1361.2px;width:47.59999999999991px;height:47.59999999999991px;background:#df97b1;border-radius:50%;box-shadow:inset 0 0 0 2px rgba(0,0,0,0.08)"></div>
<div class="t" style="left:712.36px;top:1375.00px;font-size:19.5px;line-height:19.5px;letter-spacing:0px;font-weight:700;transform:scaleX(0.9407);transform-origin:0 0;color:#4a3340;">DA</div>
<div style="position:absolute;left:766.2px;top:1361.2px;width:47.59999999999991px;height:47.59999999999991px;background:#b3e4a1;border-radius:50%;box-shadow:inset 0 0 0 2px rgba(0,0,0,0.08)"></div>
<div class="t" style="left:776.50px;top:1375.00px;font-size:19.5px;line-height:19.5px;letter-spacing:0px;font-weight:700;color:#3d5536;">SH</div>
<div style="position:absolute;left:83.60000000000001px;top:1431.2px;width:47.60000000000001px;height:47.59999999999991px;background:#c59de0;border-radius:50%;box-shadow:inset 0 0 0 2px rgba(0,0,0,0.08)"></div>
<div class="t" style="left:93.08px;top:1445.00px;font-size:19.5px;line-height:19.5px;letter-spacing:0px;font-weight:700;transform:scaleX(1.0231);transform-origin:0 0;color:#4a3a5a;">AN</div>
<div class="t" style="left:148.30px;top:1438.75px;font-size:32.5px;line-height:32.5px;letter-spacing:-0.25px;font-weight:400;color:#262522;">Amy Opossum</div>
<div style="position:absolute;left:83.60000000000001px;top:1495.2px;width:47.60000000000001px;height:47.59999999999991px;background:#d6e0a8;border-radius:50%;box-shadow:inset 0 0 0 2px rgba(0,0,0,0.08)"></div>
<div class="t" style="left:93.08px;top:1509.00px;font-size:19.5px;line-height:19.5px;letter-spacing:0px;font-weight:700;transform:scaleX(1.0231);transform-origin:0 0;color:#4d5235;">AN</div>
<div class="t" style="left:148.30px;top:1502.75px;font-size:32.5px;line-height:32.5px;letter-spacing:0.0px;font-weight:400;color:#262522;">Andrew Opossum</div>
<div style="position:absolute;left:83.60000000000001px;top:1559.2px;width:47.60000000000001px;height:47.59999999999991px;background:#b8d4bf;border-radius:50%;box-shadow:inset 0 0 0 2px rgba(0,0,0,0.08)"></div>
<div class="t" style="left:94.53px;top:1573.00px;font-size:19.5px;line-height:19.5px;letter-spacing:0px;font-weight:700;transform:scaleX(0.9192);transform-origin:0 0;color:#3f5446;">SA</div>
<div class="t" style="left:146.30px;top:1566.75px;font-size:32.5px;line-height:32.5px;letter-spacing:-0.25px;font-weight:400;color:#262522;">Sally Opossum</div>
<div style="position:absolute;left:83.60000000000001px;top:1623.2px;width:47.60000000000001px;height:47.59999999999991px;background:#98a4ba;border-radius:50%;box-shadow:inset 0 0 0 2px rgba(0,0,0,0.08)"></div>
<div class="t" style="left:92.22px;top:1637.00px;font-size:19.5px;line-height:19.5px;letter-spacing:0px;font-weight:700;transform:scaleX(0.9793);transform-origin:0 0;color:#363c4c;">MA</div>
<div class="t" style="left:145.30px;top:1630.75px;font-size:32.5px;line-height:32.5px;letter-spacing:-0.25px;font-weight:400;color:#262522;">Mark Opossum</div>
<div style="position:absolute;left:83.60000000000001px;top:1687.2px;width:47.60000000000001px;height:47.59999999999991px;background:#df97b1;border-radius:50%;box-shadow:inset 0 0 0 2px rgba(0,0,0,0.08)"></div>
<div class="t" style="left:93.76px;top:1701.00px;font-size:19.5px;line-height:19.5px;letter-spacing:0px;font-weight:700;transform:scaleX(0.9407);transform-origin:0 0;color:#4a3340;">DA</div>
<div class="t" style="left:145.30px;top:1694.75px;font-size:32.5px;line-height:32.5px;letter-spacing:-0.5px;font-weight:400;color:#262522;">Daria Opossum</div>
<div style="position:absolute;left:83.60000000000001px;top:1751.2px;width:47.60000000000001px;height:47.59999999999991px;background:#b3e4a1;border-radius:50%;box-shadow:inset 0 0 0 2px rgba(0,0,0,0.08)"></div>
<div class="t" style="left:93.90px;top:1765.00px;font-size:19.5px;line-height:19.5px;letter-spacing:0px;font-weight:700;color:#3d5536;">SH</div>
<div class="t" style="left:146.30px;top:1758.75px;font-size:32.5px;line-height:32.5px;letter-spacing:-0.25px;font-weight:400;color:#262522;">Shelly Opossum</div>
<div style="position:absolute;left:504px;top:1425px;width:60px;height:60px;background:#fdf3ee"></div>
<div class="t" style="left:515.96px;top:1446.05px;font-size:20.5px;line-height:20.5px;letter-spacing:0px;font-weight:400;transform:scaleX(0.8800);transform-origin:0 0;color:#a9713f;">63%</div>
<div style="position:absolute;left:568px;top:1425px;width:60px;height:60px;background:#f9f8f6"></div>
<div style="position:absolute;left:586px;top:1457px;width:22px;height:2px;background:#5f5c55"></div>
<div style="position:absolute;left:632px;top:1425px;width:60px;height:60px;background:#fdf3ee"></div>
<div class="t" style="left:643.96px;top:1446.05px;font-size:20.5px;line-height:20.5px;letter-spacing:0px;font-weight:400;transform:scaleX(0.8800);transform-origin:0 0;color:#a9713f;">64%</div>
<div style="position:absolute;left:696px;top:1425px;width:60px;height:60px;background:#fdf3ee"></div>
<div class="t" style="left:707.96px;top:1446.05px;font-size:20.5px;line-height:20.5px;letter-spacing:0px;font-weight:400;transform:scaleX(0.8800);transform-origin:0 0;color:#a9713f;">52%</div>
<div style="position:absolute;left:760px;top:1425px;width:60px;height:60px;background:#f9f8f6"></div>
<div class="t" style="left:776.80px;top:1446.05px;font-size:20.5px;line-height:20.5px;letter-spacing:0px;font-weight:400;transform:scaleX(0.8800);transform-origin:0 0;color:#5f5c55;">0%</div>
<div style="position:absolute;left:440px;top:1489px;width:60px;height:60px;background:#fdf3ee"></div>
<div class="t" style="left:451.96px;top:1510.05px;font-size:20.5px;line-height:20.5px;letter-spacing:0px;font-weight:400;transform:scaleX(0.8800);transform-origin:0 0;color:#a9713f;">63%</div>
<div style="position:absolute;left:568px;top:1489px;width:60px;height:60px;background:#fdf3ee"></div>
<div class="t" style="left:579.96px;top:1510.05px;font-size:20.5px;line-height:20.5px;letter-spacing:0px;font-weight:400;transform:scaleX(0.8800);transform-origin:0 0;color:#a9713f;">50%</div>
<div style="position:absolute;left:632px;top:1489px;width:60px;height:60px;background:#fcecea"></div>
<div class="t" style="left:643.96px;top:1510.05px;font-size:20.5px;line-height:20.5px;letter-spacing:0px;font-weight:400;transform:scaleX(0.8800);transform-origin:0 0;color:#b4473b;">21%</div>
<div style="position:absolute;left:696px;top:1489px;width:60px;height:60px;background:#fdf3ee"></div>
<div class="t" style="left:707.96px;top:1510.05px;font-size:20.5px;line-height:20.5px;letter-spacing:0px;font-weight:400;transform:scaleX(0.8800);transform-origin:0 0;color:#a9713f;">55%</div>
<div style="position:absolute;left:760px;top:1489px;width:60px;height:60px;background:#fcecea"></div>
<div class="t" style="left:771.96px;top:1510.05px;font-size:20.5px;line-height:20.5px;letter-spacing:0px;font-weight:400;transform:scaleX(0.8800);transform-origin:0 0;color:#b4473b;">27%</div>
<div style="position:absolute;left:440px;top:1553px;width:60px;height:60px;background:#f9f8f6"></div>
<div style="position:absolute;left:458px;top:1585px;width:22px;height:2px;background:#5f5c55"></div>
<div style="position:absolute;left:504px;top:1553px;width:60px;height:60px;background:#fdf3ee"></div>
<div class="t" style="left:515.96px;top:1574.05px;font-size:20.5px;line-height:20.5px;letter-spacing:0px;font-weight:400;transform:scaleX(0.8800);transform-origin:0 0;color:#a9713f;">50%</div>
<div style="position:absolute;left:632px;top:1553px;width:60px;height:60px;background:#f9f8f6"></div>
<div style="position:absolute;left:650px;top:1585px;width:22px;height:2px;background:#5f5c55"></div>
<div style="position:absolute;left:696px;top:1553px;width:60px;height:60px;background:#f9f8f6"></div>
<div style="position:absolute;left:714px;top:1585px;width:22px;height:2px;background:#5f5c55"></div>
<div style="position:absolute;left:760px;top:1553px;width:60px;height:60px;background:#f9f8f6"></div>
<div style="position:absolute;left:778px;top:1585px;width:22px;height:2px;background:#5f5c55"></div>
<div style="position:absolute;left:440px;top:1617px;width:60px;height:60px;background:#fdf3ee"></div>
<div class="t" style="left:451.96px;top:1638.05px;font-size:20.5px;line-height:20.5px;letter-spacing:0px;font-weight:400;transform:scaleX(0.8800);transform-origin:0 0;color:#a9713f;">64%</div>
<div style="position:absolute;left:504px;top:1617px;width:60px;height:60px;background:#fcecea"></div>
<div class="t" style="left:515.96px;top:1638.05px;font-size:20.5px;line-height:20.5px;letter-spacing:0px;font-weight:400;transform:scaleX(0.8800);transform-origin:0 0;color:#b4473b;">21%</div>
<div style="position:absolute;left:568px;top:1617px;width:60px;height:60px;background:#f9f8f6"></div>
<div style="position:absolute;left:586px;top:1649px;width:22px;height:2px;background:#5f5c55"></div>
<div style="position:absolute;left:696px;top:1617px;width:60px;height:60px;background:#fdf3ee"></div>
<div class="t" style="left:707.96px;top:1638.05px;font-size:20.5px;line-height:20.5px;letter-spacing:0px;font-weight:400;transform:scaleX(0.8800);transform-origin:0 0;color:#a9713f;">38%</div>
<div style="position:absolute;left:760px;top:1617px;width:60px;height:60px;background:#f9f8f6"></div>
<div class="t" style="left:776.80px;top:1638.05px;font-size:20.5px;line-height:20.5px;letter-spacing:0px;font-weight:400;transform:scaleX(0.8800);transform-origin:0 0;color:#5f5c55;">0%</div>
<div style="position:absolute;left:440px;top:1681px;width:60px;height:60px;background:#fdf3ee"></div>
<div class="t" style="left:451.96px;top:1702.05px;font-size:20.5px;line-height:20.5px;letter-spacing:0px;font-weight:400;transform:scaleX(0.8800);transform-origin:0 0;color:#a9713f;">52%</div>
<div style="position:absolute;left:504px;top:1681px;width:60px;height:60px;background:#fdf3ee"></div>
<div class="t" style="left:515.96px;top:1702.05px;font-size:20.5px;line-height:20.5px;letter-spacing:0px;font-weight:400;transform:scaleX(0.8800);transform-origin:0 0;color:#a9713f;">55%</div>
<div style="position:absolute;left:568px;top:1681px;width:60px;height:60px;background:#f9f8f6"></div>
<div style="position:absolute;left:586px;top:1713px;width:22px;height:2px;background:#5f5c55"></div>
<div style="position:absolute;left:632px;top:1681px;width:60px;height:60px;background:#fdf3ee"></div>
<div class="t" style="left:643.96px;top:1702.05px;font-size:20.5px;line-height:20.5px;letter-spacing:0px;font-weight:400;transform:scaleX(0.8800);transform-origin:0 0;color:#a9713f;">38%</div>
<div style="position:absolute;left:760px;top:1681px;width:60px;height:60px;background:#f9f8f6"></div>
<div class="t" style="left:776.80px;top:1702.05px;font-size:20.5px;line-height:20.5px;letter-spacing:0px;font-weight:400;transform:scaleX(0.8800);transform-origin:0 0;color:#5f5c55;">0%</div>
<div style="position:absolute;left:440px;top:1745px;width:60px;height:60px;background:#f9f8f6"></div>
<div class="t" style="left:456.80px;top:1766.05px;font-size:20.5px;line-height:20.5px;letter-spacing:0px;font-weight:400;transform:scaleX(0.8800);transform-origin:0 0;color:#5f5c55;">0%</div>
<div style="position:absolute;left:504px;top:1745px;width:60px;height:60px;background:#fcecea"></div>
<div class="t" style="left:515.96px;top:1766.05px;font-size:20.5px;line-height:20.5px;letter-spacing:0px;font-weight:400;transform:scaleX(0.8800);transform-origin:0 0;color:#b4473b;">27%</div>
<div style="position:absolute;left:568px;top:1745px;width:60px;height:60px;background:#f9f8f6"></div>
<div style="position:absolute;left:586px;top:1777px;width:22px;height:2px;background:#5f5c55"></div>
<div style="position:absolute;left:632px;top:1745px;width:60px;height:60px;background:#f9f8f6"></div>
<div class="t" style="left:648.80px;top:1766.05px;font-size:20.5px;line-height:20.5px;letter-spacing:0px;font-weight:400;transform:scaleX(0.8800);transform-origin:0 0;color:#5f5c55;">0%</div>
<div style="position:absolute;left:696px;top:1745px;width:60px;height:60px;background:#f9f8f6"></div>
<div class="t" style="left:712.80px;top:1766.05px;font-size:20.5px;line-height:20.5px;letter-spacing:0px;font-weight:400;transform:scaleX(0.8800);transform-origin:0 0;color:#5f5c55;">0%</div>
<div style="position:absolute;left:1564px;top:1199px;width:1474px;height:732px;border:2px solid #e1ded5;border-radius:16px;box-sizing:border-box;background:#fdfdfc"></div>
<div class="t" style="left:1606.50px;top:1247.40px;font-size:34.0px;line-height:34.0px;letter-spacing:0.0px;font-weight:400;-webkit-text-stroke:1.0px;color:#262522;">Agreement Distribution</div>
<div style="position:absolute;left:1773.7px;top:1702.2px;width:44.0px;height:166.79999999999995px;background:#f0a93c"></div>
<div style="position:absolute;left:1822.8px;top:1702.2px;width:44.0px;height:166.79999999999995px;background:#f0a93c"></div>
<div style="position:absolute;left:1871.9px;top:1368.6px;width:44.0px;height:500.4000000000001px;background:#f0a93c"></div>
<div style="position:absolute;left:2019.1px;top:1535.4px;width:44.0px;height:333.5999999999999px;background:#f0a93c"></div>
<div style="position:absolute;left:2068.2px;top:1368.6px;width:44.0px;height:500.4000000000001px;background:#f0a93c"></div>
<div style="position:absolute;left:2215.5px;top:1702.2px;width:44.0px;height:166.79999999999995px;background:#f0a93c"></div>
<div style="position:absolute;left:2264.6px;top:1702.2px;width:44.0px;height:166.79999999999995px;background:#f0a93c"></div>
<div style="position:absolute;left:2313.7px;top:1368.6px;width:44.0px;height:500.4000000000001px;background:#f0a93c"></div>
<div style="position:absolute;left:2362.8px;top:1535.4px;width:44.0px;height:333.5999999999999px;background:#f0a93c"></div>
<div style="position:absolute;left:2460.9px;top:1702.2px;width:44.0px;height:166.79999999999995px;background:#f0a93c"></div>
<div style="position:absolute;left:2510.0px;top:1535.4px;width:44.0px;height:333.5999999999999px;background:#f0a93c"></div>
<div style="position:absolute;left:2559.1px;top:1535.4px;width:44.0px;height:333.5999999999999px;background:#f0a93c"></div>
<div style="position:absolute;left:2608.2px;top:1702.2px;width:44.0px;height:166.79999999999995px;background:#f0a93c"></div>
<div style="position:absolute;left:1647px;top:1868px;width:1080px;height:2px;background:#1f1f1f"></div>
<div style="position:absolute;left:1695.0px;top:1869px;width:2.0px;height:12px;background:#1f1f1f"></div>
<div class="t" style="left:1682.50px;top:1885.10px;font-size:19.0px;line-height:19.0px;letter-spacing:0px;font-weight:400;color:#1f1f1f;">0.0</div>
<div style="position:absolute;left:1793.2px;top:1869px;width:2.0px;height:12px;background:#1f1f1f"></div>
<div class="t" style="left:1780.68px;top:1885.10px;font-size:19.0px;line-height:19.0px;letter-spacing:0px;font-weight:400;color:#1f1f1f;">0.1</div>
<div style="position:absolute;left:1891.4px;top:1869px;width:2.0px;height:12px;background:#1f1f1f"></div>
<div class="t" style="left:1879.36px;top:1885.10px;font-size:19.0px;line-height:19.0px;letter-spacing:0px;font-weight:400;color:#1f1f1f;">0.2</div>
<div style="position:absolute;left:1989.5px;top:1869px;width:2.0px;height:12px;background:#1f1f1f"></div>
<div class="t" style="left:1977.04px;top:1885.10px;font-size:19.0px;line-height:19.0px;letter-spacing:0px;font-weight:400;color:#1f1f1f;">0.3</div>
<div style="position:absolute;left:2087.7px;top:1869px;width:2.0px;height:12px;background:#1f1f1f"></div>
<div class="t" style="left:2075.22px;top:1885.10px;font-size:19.0px;line-height:19.0px;letter-spacing:0px;font-weight:400;color:#1f1f1f;">0.4</div>
<div style="position:absolute;left:2185.9px;top:1869px;width:2.0px;height:12px;background:#1f1f1f"></div>
<div class="t" style="left:2173.40px;top:1885.10px;font-size:19.0px;line-height:19.0px;letter-spacing:0px;font-weight:400;color:#1f1f1f;">0.5</div>
<div style="position:absolute;left:2284.1px;top:1869px;width:2.0px;height:12px;background:#1f1f1f"></div>
<div class="t" style="left:2271.58px;top:1885.10px;font-size:19.0px;line-height:19.0px;letter-spacing:0px;font-weight:400;color:#1f1f1f;">0.6</div>
<div style="position:absolute;left:2382.3px;top:1869px;width:2.0px;height:12px;background:#1f1f1f"></div>
<div class="t" style="left:2370.26px;top:1885.10px;font-size:19.0px;line-height:19.0px;letter-spacing:0px;font-weight:400;color:#1f1f1f;">0.7</div>
<div style="position:absolute;left:2480.4px;top:1869px;width:2.0px;height:12px;background:#1f1f1f"></div>
<div class="t" style="left:2467.94px;top:1885.10px;font-size:19.0px;line-height:19.0px;letter-spacing:0px;font-weight:400;color:#1f1f1f;">0.8</div>
<div style="position:absolute;left:2578.6px;top:1869px;width:2.0px;height:12px;background:#1f1f1f"></div>
<div class="t" style="left:2566.12px;top:1885.10px;font-size:19.0px;line-height:19.0px;letter-spacing:0px;font-weight:400;color:#1f1f1f;">0.9</div>
<div style="position:absolute;left:2676.8px;top:1869px;width:2.0px;height:12px;background:#1f1f1f"></div>
<div class="t" style="left:2664.30px;top:1885.10px;font-size:19.0px;line-height:19.0px;letter-spacing:0px;font-weight:400;color:#1f1f1f;">1.0</div>
<div style="position:absolute;left:1634px;top:1868.5px;width:12px;height:2.0px;background:#1f1f1f"></div>
<div class="t" style="left:1617.40px;top:1860.00px;font-size:19.0px;line-height:19.0px;letter-spacing:0px;font-weight:400;color:#1f1f1f;">0</div>
<div style="position:absolute;left:1634px;top:1701.7px;width:12px;height:2.0px;background:#1f1f1f"></div>
<div class="t" style="left:1617.40px;top:1693.20px;font-size:19.0px;line-height:19.0px;letter-spacing:0px;font-weight:400;color:#1f1f1f;">1</div>
<div style="position:absolute;left:1634px;top:1534.9px;width:12px;height:2.0px;background:#1f1f1f"></div>
<div class="t" style="left:1617.40px;top:1526.40px;font-size:19.0px;line-height:19.0px;letter-spacing:0px;font-weight:400;color:#1f1f1f;">2</div>
<div style="position:absolute;left:1634px;top:1368.1px;width:12px;height:2.0px;background:#1f1f1f"></div>
<div class="t" style="left:1617.40px;top:1359.60px;font-size:19.0px;line-height:19.0px;letter-spacing:0px;font-weight:400;color:#1f1f1f;">3</div>
<div class="t" style="left:1630.50px;top:1342.25px;font-size:20.5px;line-height:20.5px;letter-spacing:-0.25px;font-weight:700;color:#1f1f1f;">Task count</div>
<div class="t" style="left:2593.70px;top:1843.15px;font-size:21.5px;line-height:21.5px;letter-spacing:-1.0px;font-weight:700;color:#1f1f1f;">Agreement, %</div>
</body></html>
